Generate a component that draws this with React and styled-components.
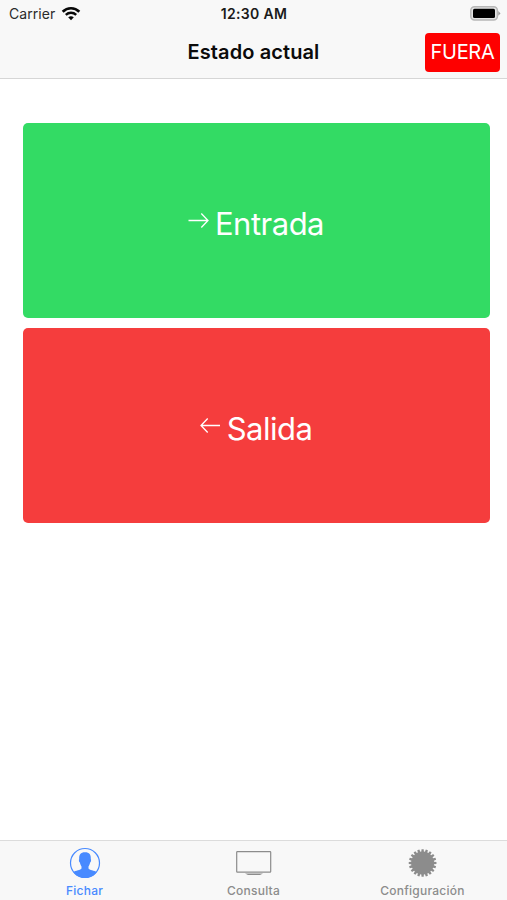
import React from "react";
import styled, { createGlobalStyle } from "styled-components";

const GlobalStyle = createGlobalStyle`
  *, *::before, *::after { box-sizing: border-box; }
  body { margin: 0; background: #fff; font-family: Inter, "Liberation Sans", sans-serif; }
`;

const Screen = styled.div`
  display: flex;
  flex-direction: column;
  height: 100vh;
  overflow: hidden;
  background: #fff;
`;

const Header = styled.header`
  height: 79px;
  flex: none;
  background: #f8f8f8;
  border-bottom: 1px solid #d6d6d6;
`;

const StatusBar = styled.div`
  display: grid;
  grid-template-columns: 1fr auto 1fr;
  align-items: center;
  height: 27px;
  padding: 0 6px 0 9px;
`;

const Carrier = styled.div`
  display: flex;
  align-items: center;
  gap: 6px;
  font-size: 14px;
  letter-spacing: 0.05px;
  color: #2b2b2b;

  svg { margin-bottom: 1px; }
`;

const Time = styled.div`
  margin-right: 2px;
  font-size: 14px;
  font-weight: 600;
  letter-spacing: 0.35px;
  color: #1a1a1a;
`;

const BatterySlot = styled.div`
  display: flex;
  justify-content: flex-end;
`;

const NavBar = styled.div`
  display: grid;
  grid-template-columns: 1fr auto 1fr;
  align-items: center;
  height: 50px;
  padding: 0 7px;
`;

const Title = styled.h1`
  grid-column: 2;
  margin: 0;
  font-size: 20px;
  font-weight: 600;
  letter-spacing: 0.1px;
  color: #0b0b0b;
  white-space: nowrap;
`;

const StatusBadge = styled.div`
  justify-self: end;
  display: flex;
  align-items: center;
  justify-content: center;
  width: 75px;
  height: 39px;
  border-radius: 4px;
  background: #fe0000;
  color: #fff;
  font-size: 20px;
  letter-spacing: -0.3px;
`;

const Content = styled.main`
  flex: 1;
  display: flex;
  flex-direction: column;
  gap: 10px;
  padding: 44.4px 17px 0 23px;
`;

const ActionButton = styled.button`
  display: flex;
  align-items: center;
  justify-content: center;
  gap: 6px;
  height: 195px;
  padding: 0 1px 0 0;
  border: 0;
  border-radius: 5px;
  background: ${(p) => p.$color};
  color: #fff;
  font-family: inherit;
  font-size: 31px;
  letter-spacing: -0.5px;
  line-height: 40px;

  svg { margin-bottom: 1px; }
`;

const ButtonLabel = styled.span`
  padding-top: 6px;
`;

const TabBar = styled.nav`
  display: grid;
  grid-template-columns: repeat(3, 1fr);
  height: 60px;
  flex: none;
  background: #f8f8f8;
  border-top: 1px solid #dcdcdc;
`;

const Tab = styled.a`
  display: flex;
  flex-direction: column;
  align-items: center;
  padding-top: 6px;
  color: ${(p) => (p.$active ? "#488aff" : "#8c8c8c")};
`;

const TabLabel = styled.span`
  margin-top: 4px;
  font-size: 12px;
  font-weight: 500;
  letter-spacing: 0.25px;
  line-height: 16px;
`;

const WifiIcon = () => (
  <svg width="20" height="15" viewBox="0 0 20 15" fill="none" stroke="#080808">
    <path d="M1.7 5.7C6.3 1.1 13.7 1.1 18.3 5.7" strokeWidth="2.7" />
    <path d="M4.8 8.9C7.8 6.1 12.2 6.1 15.2 8.9" strokeWidth="2.4" />
    <path d="M10 14.2L7.2 11.3Q10 9 12.8 11.3Z" fill="#080808" stroke="none" />
  </svg>
);

const BatteryIcon = () => (
  <svg width="31" height="15" viewBox="0 0 31 15">
    <rect x="0.8" y="0.8" width="26.6" height="13.2" rx="3.7" fill="#e4e4e4" stroke="#b7b7b7" strokeWidth="1.5" />
    <rect x="3" y="2.8" width="22" height="9.2" rx="1.5" fill="#000" />
    <path d="M28.3 5L30.5 7.4L28.3 9.8Z" fill="#999" />
  </svg>
);

const ArrowIcon = ({ back }) => (
  <svg width="21" height="17" viewBox="0 0 21 17" fill="none" stroke="#fff" strokeWidth="1.3">
    <path d={back ? "M20 8.5H1M7.7 1.5L1 8.5L7.7 15.5" : "M0.5 8.5H20M13.3 1.5L20 8.5L13.3 15.5"} />
  </svg>
);

const PersonIcon = () => (
  <svg width="32" height="32" viewBox="0 0 32 32">
    <circle cx="16" cy="16" r="14.5" fill="none" stroke="currentColor" strokeWidth="1.2" />
    <path
      d="M16 5.2C11.6 5.2 9.9 7.8 10.2 12.2C9.6 12.4 9.9 15.1 10.9 15.6C11.2 17.6 11.9 18.6 12.5 19.5V21.6C11.8 23.3 6.5 23.5 4.3 25.2Q9.1 30.9 16 30.9T27.7 25.2C25.5 23.5 20.2 23.3 19.5 21.6V19.5C20.1 18.6 20.8 17.6 21.1 15.6C22.1 15.1 22.4 12.4 21.8 12.2C22.1 7.8 20.4 5.2 16 5.2Z"
      fill="currentColor"
    />
  </svg>
);

const MonitorIcon = () => (
  <svg width="36" height="32" viewBox="0 0 36 32">
    <rect x="0.7" y="4.6" width="34" height="20.5" rx="0.7" fill="none" stroke="currentColor" strokeWidth="1.2" />
    <path d="M9 26.5H27L24 28H12Z" fill="currentColor" />
  </svg>
);

const TEETH = 20;
const gearPoints = Array.from({ length: TEETH }, (_, i) =>
  [[-0.35, 11.5], [-0.25, 13.9], [0.25, 13.9], [0.35, 11.5]].map(([offset, radius]) => {
    const angle = ((i + offset) * 2 * Math.PI) / TEETH;
    return `${(15.6 + radius * Math.sin(angle)).toFixed(2)},${(16 - radius * Math.cos(angle)).toFixed(2)}`;
  }).join(" ")
).join(" ");

const GearIcon = () => (
  <svg width="32" height="32" viewBox="0 0 32 32">
    <polygon points={gearPoints} fill="currentColor" />
  </svg>
);

export default function App() {
  return (
    <Screen>
      <GlobalStyle />
      <Header>
        <StatusBar>
          <Carrier>Carrier <WifiIcon /></Carrier>
          <Time>12:30 AM</Time>
          <BatterySlot><BatteryIcon /></BatterySlot>
        </StatusBar>
        <NavBar>
          <Title>Estado actual</Title>
          <StatusBadge>FUERA</StatusBadge>
        </NavBar>
      </Header>
      <Content>
        <ActionButton $color="#33db64">
          <ArrowIcon />
          <ButtonLabel>Entrada</ButtonLabel>
        </ActionButton>
        <ActionButton $color="#f53d3d">
          <ArrowIcon back />
          <ButtonLabel>Salida</ButtonLabel>
        </ActionButton>
      </Content>
      <TabBar>
        <Tab $active>
          <PersonIcon />
          <TabLabel>Fichar</TabLabel>
        </Tab>
        <Tab>
          <MonitorIcon />
          <TabLabel>Consulta</TabLabel>
        </Tab>
        <Tab>
          <GearIcon />
          <TabLabel>Configuración</TabLabel>
        </Tab>
      </TabBar>
    </Screen>
  );
}
